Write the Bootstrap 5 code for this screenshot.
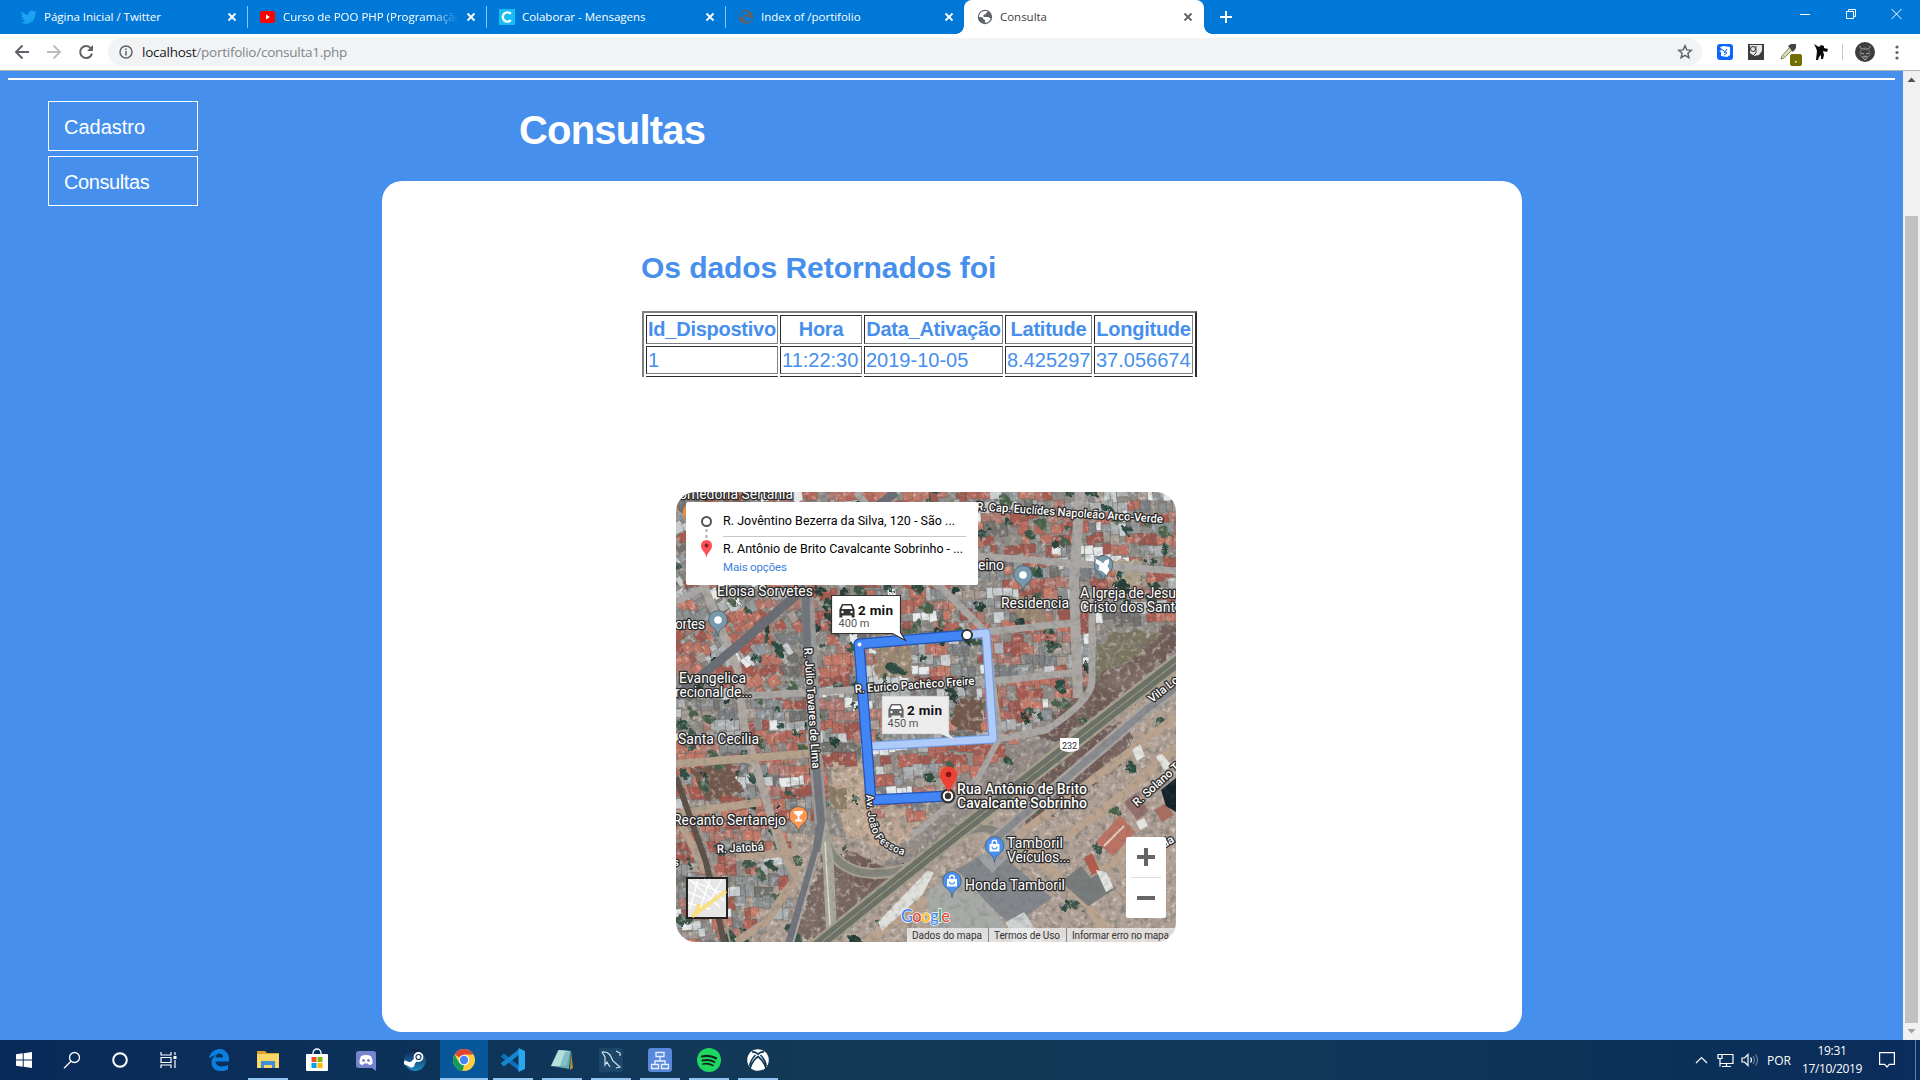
<!DOCTYPE html>
<html lang="pt-BR">
<head>
<meta charset="utf-8">
<title>Consulta</title>
<link href="https://cdn.jsdelivr.net/npm/bootstrap@5.3.0/dist/css/bootstrap.min.css" rel="stylesheet">
<style>
html,body{width:1920px;height:1080px;overflow:hidden}
body{font-family:"Liberation Sans",Arial,sans-serif;background:#468fed;line-height:1.2}
svg{display:block;flex:none}
.tabstrip{height:34px;background:#0078d7;font:11.5px "Open Sans",sans-serif;color:#fff}
.btab{width:239px;padding-left:12px;position:relative;height:34px;flex:none}
.btab .ttl{width:176px;flex:none;margin-left:7px;padding-bottom:1px;overflow:hidden;white-space:nowrap;letter-spacing:-.02px}
.btab .cls{margin-left:7px}
.btab.sep{border-right:1px solid transparent;border-image:linear-gradient(#0078d7 20%,#8fc4f0 20%,#8fc4f0 80%,#0078d7 80%) 1}
.btab.active{background:#fff;color:#3c4043;border-radius:8px 8px 0 0;width:240px;padding-left:13px;margin-left:-1px}
.btab.active:before,.btab.active:after{content:"";position:absolute;bottom:0;width:8px;height:8px}
.btab.active:before{left:-8px;background:radial-gradient(circle at 0 0,transparent 7.5px,#fff 8px)}
.btab.active:after{right:-8px;background:radial-gradient(circle at 100% 0,transparent 7.5px,#fff 8px)}
.fade-end{-webkit-mask-image:linear-gradient(90deg,#000 84%,transparent 100%)}
.toolbar{height:37px;background:#fff;border-bottom:1px solid #b3b3b3;padding:0 0 0 14px}
.omni{width:1594px;height:28px;border-radius:14px;background:#f1f3f4;margin-left:14px;padding:0 9px 0 11px;font:13.5px "Open Sans",sans-serif;color:#80868b}
.omni b{font-weight:400;color:#202124}
.omni span{margin-left:9px;letter-spacing:-.25px}
.viewport-area{height:969px}
.pagebody{width:1903px}
.rule{height:2px;background:#fff;margin:7px 8px 0}
.side{width:382px;padding:21px 0 0 48px;gap:5px}
.side a{width:150px;height:50px;border:1px solid #fff;color:#fff;text-decoration:none;font-size:20px;padding:1px 0 0 15px}
.side a+a{letter-spacing:-.4px}
.heading{height:101px;padding:0 0 2px 137px}
.heading h1{font-size:40px;font-weight:700;color:#fff;line-height:1;letter-spacing:-.8px}
.panel-main{width:1140px;height:851px;border-radius:20px;background:#fff;padding:70px 0 0 260px}
.panel-main h2{font-size:30px;line-height:34px;font-weight:700;color:#468fed;margin:0 0 26px -1px;letter-spacing:-.06px}
.tblwrap{height:66px;overflow:hidden}
.dados{width:555px;table-layout:fixed;border-collapse:separate;border-spacing:2px;border:2px solid;border-color:#808080 #2c2c2c #2c2c2c #808080;color:#468fed;font-size:20px;line-height:22px}
.dados th,.dados td{border:1px solid;border-color:#2c2c2c #808080 #808080 #2c2c2c;padding:0 1px;height:28px;white-space:nowrap}
.dados th{height:29px;text-align:center;letter-spacing:-.25px;padding-bottom:2px}
.map{width:500px;height:450px;margin:115px 0 0 34px;border-radius:20px;overflow:hidden;font-family:Roboto,sans-serif}
.scroll{width:17px;background:#f1f1f1}
.thumb{width:13px;height:807px;background:#c1c1c1}
.taskbar{height:40px;background:linear-gradient(90deg,#092a5a,#0b2f59 15%,#10375a 30%,#123a55 45%,#0f3659 75%,#0a3058 88%,#0b2c5c);color:#fff;font:12px "Open Sans",sans-serif}
.tk{width:48px;height:40px;display:flex;align-items:center;justify-content:center;flex:none}
.apps{gap:1px;margin-left:3px}
.run{background:linear-gradient(#93c5f3,#93c5f3) bottom/40px 2px no-repeat}
.run.on{background:linear-gradient(#93c5f3,#93c5f3) bottom/48px 2px no-repeat,#07589a}
.lang{width:30px;margin-left:8px}
.clock{width:70px;line-height:18px;letter-spacing:-.35px}
.peek{width:1px;background:#5f7ea3;margin-left:20px;margin-right:4px}
</style>
<script src="https://cdn.jsdelivr.net/npm/bootstrap@5.3.0/dist/js/bootstrap.bundle.min.js"></script>
</head>
<body class="d-flex flex-column">
<svg width="0" height="0" class="position-absolute">
<symbol id="x" viewBox="0 0 10 10"><path d="M1.5 1.5l7 7M8.500 1.500l-7 7" stroke="currentColor" stroke-width="1.8"/></symbol>
<symbol id="globe" viewBox="0 0 16 16"><circle cx="8" cy="8" r="7.2" fill="#5f6368"/><path d="M6.200 2.200c-2.600.8-4.200 3-4.200 5.800 2.400 0 4 .2 4.200 1.800.1 1 1.800.4 1.800 1.600v2.400c3-.2 5.200-2 5.800-4.600-1.200.2-1.600-1.200-3-1.200H7.600c-1.800 0-1.600-2.600.2-2.600 1.600 0 .6-1.600 2.200-2l.4-1.200C9 1.800 7.500 1.800 6.200 2.200z" fill="var(--land,#fff)"/></symbol>
<symbol id="pin" viewBox="-10 -10 20 28"><path d="M0 16.500C-1 10-3 9-6.500 6.500A9.300 9.300 0 1 1 6.500 6.500C3 9 1 10 0 16.500z"/></symbol>
<symbol id="car" viewBox="0 0 16 15"><path d="M3 1h10l2.600 5.500V14.500h-3v-2H3.400v2h-3V6.500z"/><path d="M4 2.600h8l1.400 3.400H2.600z" fill="#fff"/><circle cx="3.500" cy="9" r="1.200" fill="#fff"/><circle cx="12.500" cy="9" r="1.200" fill="#fff"/></symbol>
</svg>

<header class="tabstrip d-flex">
 <div style="width:9px"></div>
 <div class="btab sep d-flex align-items-center"><svg width="16" height="16" viewBox="0 0 24 24" fill="#1da1f2"><path d="M23.600 4.900c-.9.4-1.800.6-2.800.8 1-.6 1.800-1.600 2.100-2.700-1 .6-2 1-3.100 1.200a4.900 4.900 0 0 0-8.400 4.500C7.300 8.500 3.700 6.500 1.300 3.600c-1.300 2.200-.7 5.100 1.500 6.600-.8 0-1.600-.2-2.200-.6 0 2.300 1.600 4.400 3.900 4.900-.7.200-1.500.2-2.200.1.600 2 2.400 3.300 4.600 3.400A9.900 9.900 0 0 1-.4 20 14 14 0 0 0 21.200 7.400c1-.7 1.800-1.600 2.400-2.500z"/></svg><div class="ttl">Página Inicial / Twitter</div><svg class="cls" width="10" height="10"><use href="#x"/></svg></div>
 <div class="btab sep d-flex align-items-center"><svg width="16" height="16"><rect y="2" width="15" height="12" rx="2.500" fill="#f00"/><path d="M6 5.500v5l4-2.500z" fill="#fff"/></svg><div class="ttl fade-end">Curso de POO PHP (Programação</div><svg class="cls" width="10" height="10"><use href="#x"/></svg></div>
 <div class="btab sep d-flex align-items-center"><svg width="16" height="16"><rect width="16" height="16" fill="#15bdf3"/><path d="M11.800 4.900A4.600 4.600 0 1 0 11.800 11.100" fill="none" stroke="#fff" stroke-width="2.400"/></svg><div class="ttl">Colaborar - Mensagens</div><svg class="cls" width="10" height="10"><use href="#x"/></svg></div>
 <div class="btab d-flex align-items-center"><svg width="16" height="16" style="--land:#0078d7"><use href="#globe"/></svg><div class="ttl">Index of /portifolio</div><svg class="cls" width="10" height="10"><use href="#x"/></svg></div>
 <div class="btab active d-flex align-items-center"><svg width="16" height="16"><use href="#globe"/></svg><div class="ttl">Consulta</div><svg class="cls" width="10" height="10" color="#5f6368"><use href="#x"/></svg></div>
 <svg width="14" height="34" style="margin-left:15px"><path d="M7 11v12M1 17h12" stroke="#fff" stroke-width="2"/></svg>
 <svg width="110" height="34" class="ms-auto me-3" fill="none" stroke="#fff"><path d="M6 14.500h10M97.500 9l10 10M107.500 9l-10 10"/><path d="M52.500 11.500h7v7h-7zM54.500 11V9.500h7v7H60"/></svg>
</header>

<div class="toolbar d-flex align-items-center">
 <svg width="80" height="16" fill="none" stroke="#5f6368" stroke-width="2"><path d="M15 8H2M8.500 1.500L2 8l6.500 6.500"/><path d="M33 8h13M39.500 1.500L46 8l-6.500 6.500" stroke="#babcbe"/><path d="M77 4.500A6 6 0 1 0 78 9.500"/><path d="M79 1v6h-6z" fill="#5f6368" stroke="none"/></svg>
 <div class="omni d-flex align-items-center"><svg width="14" height="14" fill="none" stroke="#5f6368" stroke-width="1.500"><circle cx="7" cy="7" r="6"/><path d="M7 6v4.500M7 3.500V5"/></svg><span><b>localhost</b>/portifolio/consulta1.php</span>
 <svg class="ms-auto" width="16" height="16" viewBox="0 0 16 16" fill="none" stroke="#5f6368" stroke-width="1.500"><path d="M8 1.800l1.800 4.100 4.500.4-3.400 3 1 4.400L8 11.400l-3.900 2.300 1-4.400-3.400-3 4.500-.4z"/></svg></div>
 <svg style="margin-left:15px" width="196" height="36" viewBox="1718 34 196 36">
  <rect x="1718" y="44" width="16" height="16" rx="3" fill="#0a66ff"/><path d="M1721 47l4-1 6 1v8l-3 2-6-1v-4l-2-1 3-1z" fill="#fff"/><path d="M1722 49l6 4-3 2M1728 49l-3 4" stroke="#0a66ff" fill="none"/>
  <rect x="1749" y="44" width="16" height="16" fill="#3c3c3c"/><path d="M1751 45h12v6l-3 4-5 1-4-3z" fill="#e7e7e7"/><circle cx="1754" cy="49" r="2.500" fill="none" stroke="#333"/><path d="M1757 46v7l-5 5M1752 58h4" stroke="#444" fill="none"/>
  <path d="M1782 59l1-3 8-9 3 2-9 9z" fill="#dfe3b4" stroke="#7b8060"/><path d="M1789 46l3-2 5 0v4l-3 4z" fill="#444"/>
  <rect x="1791" y="54" width="12" height="12" rx="2" fill="#716f00"/><rect x="1796" y="61" width="1.500" height="1.500" fill="#fff"/>
  <path d="M1815 44l5 3 2-2 3 1v2l4 1-1 3-4-1 1 4-1 4h-2v-4l-2 2-1 3h-2l1-9-1-3z" fill="#0a0a0a"/>
  <path d="M1843.500 44v16" stroke="#c8c8c8"/>
  <circle cx="1866" cy="52" r="10" fill="#3d3d3d"/><path d="M1861 46c0 3 2 3 5 3s5 0 5-3M1862 53l3 1M1870 53l-3 1M1863 57c2-1 4-1 6 0l-3 3z" stroke="#aaa" fill="none"/><circle cx="1866" cy="53" r="5" fill="none" stroke="#777"/>
  <g fill="#5f6368"><circle cx="1898" cy="47" r="1.600"/><circle cx="1898" cy="52.500" r="1.600"/><circle cx="1898" cy="58" r="1.600"/></g>
 </svg>
</div>

<main class="viewport-area d-flex">
 <div class="pagebody">
  <div class="rule"></div>
  <div class="d-flex">
   <nav class="side d-flex flex-column"><a href="#" class="d-flex align-items-center">Cadastro</a><a href="#" class="d-flex align-items-center">Consultas</a></nav>
   <section>
    <div class="heading d-flex align-items-center"><h1 class="m-0">Consultas</h1></div>
    <div class="panel-main">
     <h2>Os dados Retornados foi</h2>
     <div class="tblwrap"><table class="dados">
      <colgroup><col style="width:132px"><col style="width:82px"><col style="width:139px"><col style="width:87px"><col style="width:99px"></colgroup>
      <tr><th>Id_Dispostivo</th><th>Hora</th><th>Data_Ativação</th><th>Latitude</th><th>Longitude</th></tr>
      <tr><td>1</td><td>11:22:30</td><td>2019-10-05</td><td>8.425297</td><td>37.056674</td></tr>
      <tr><td></td><td></td><td></td><td></td><td></td></tr>
     </table></div>
     <div class="map">
<svg width="500" height="450" viewBox="0 0 500 450">
 <defs>
  <filter id="grain" x="0" y="0" width="100%" height="100%"><feTurbulence type="fractalNoise" baseFrequency=".16" numOctaves="4" seed="4"/><feColorMatrix values="0 0 0 0 .12  0 0 0 0 .13  0 0 0 0 .12  2.400 1.200 0 0 -1.750"/></filter>
  <filter id="grain2" x="0" y="0" width="100%" height="100%"><feTurbulence type="fractalNoise" baseFrequency=".2" numOctaves="3" seed="19"/><feColorMatrix values="0 0 0 0 .95  0 0 0 0 .93  0 0 0 0 .91  2.200 1.300 0 0 -1.800"/></filter>
  <filter id="patch" x="0" y="0" width="100%" height="100%"><feTurbulence type="fractalNoise" baseFrequency=".035" numOctaves="4" seed="8"/><feColorMatrix values="0 0 0 0 .36  0 0 0 0 .28  0 0 0 0 .26  2.600 0 0 0 -1.150"/></filter>
  <filter id="soft" x="0" y="0" width="100%" height="100%"><feGaussianBlur stdDeviation=".45"/></filter>
  <filter id="rough"><feTurbulence type="fractalNoise" baseFrequency=".12" numOctaves="3" seed="3"/><feDisplacementMap in="SourceGraphic" scale="12"/></filter>
  <path id="avp" d="M190 303C192 325 193 338 202 349C210 357 218 360 234 366"/>
 </defs>
 <g filter="url(#soft)">
 <rect width="500" height="450" fill="#b0a094"/>
 <path d="M0 0H500V150L440 190L230 350L100 340L50 450H0z" fill="#8f8b86"/>
 <g filter="url(#rough)">
 <path d="M150 265l45 5 5 40 60 10-30 40-60-15z" fill="#c0a893"/>
 <path d="M322 252l55-28 60-45 63-60v62L235 375l-35 5 40-40z" fill="#938a86"/>
 <path d="M360 290l60-55 38-5-6 30-45 45-35 20-30 10zM158 365l20-5 30 15 20 10-20 12-30-5zM400 200l60-45 40-30v30l-60 55-60 40-20-5z" fill="#6f5a55"/>
 <path d="M412 165l25-25 50 0-35 30-40 20z" fill="#7a745e"/>
 <path d="M152 352l28 42 45-2-65 56h-44z" fill="#79655f"/>
 </g>
 <rect width="500" height="450" filter="url(#patch)" opacity=".4"/>
 <rect width="500" height="450" filter="url(#grain)" opacity=".35"/>
 <g id="houses"></g>
 <g filter="url(#rough)"><path d="M198 156h38v30h-36zM340 106h28v26h-26z" fill="#99866f"/><path d="M278 208h28v32l-28-3zM14 276l40-6 14 30-38 10z" fill="#71594c"/><path d="M153 296h18v22h-18z" fill="#8d7b66"/><path d="M436 68h30v28h-28z" fill="#ac9f8b"/></g>
 <g id="trees" filter="url(#rough)"></g>
 <rect width="500" height="450" filter="url(#grain2)" opacity=".55"/>
 <g fill="none" stroke="#aaa7a4" stroke-width="8" stroke-linejoin="round">
  <path d="M27 92L62 178L68 235L106 360L118 380" stroke="#b0a8a2"/><path d="M0 272L138 261M0 322L85 310" stroke="#b5a18c"/><path d="M70 204L310 190L404 180" stroke-width="7"/><path d="M404 0L398 90L402 206" stroke-width="10"/><path d="M416 100V190Q414 210 370 238L318 248M300 64L500 79M264 96L200 40L170 20M180 0L240 70L310 140L404 130" stroke-width="7"/><path d="M310 140L324 245L300 290L235 345" stroke-width="6"/>
  <path d="M52 50L130 95M0 110L27 96" stroke-width="6"/>
  <path d="M100 335L120 385L90 430L60 450M60 365L120 360M0 322L30 380" stroke="#b5a08e"/>
  <path d="M190 450L340 345L500 225M390 345L450 300L500 255M345 350L400 400L440 450M404 398L460 350" stroke="#bba48f"/>
  <path d="M0 205L60 155L110 112L130 95M155 50L220 0" stroke="#6a6d74" stroke-width="9"/>
  <path d="M0 285L30 370L48 450" stroke="#5c5149" stroke-width="6"/><path d="M6 285L36 370L54 450" stroke="#a6968a" stroke-width="2"/>
 </g>
 <g fill="none">
  <path d="M147 335C153 380 190 392 245 372C285 340 300 330 322 340L345 362" stroke="#a7a294" stroke-width="11"/><path d="M147 335C153 380 190 392 245 372C285 340 300 330 322 340" stroke="#85857d" stroke-width="7"/>
  <path d="M131 105L134 150L139 260L145 330L152 365L156 450" stroke="#aaa79c" stroke-width="11"/>
  <path d="M131 105L134 150L139 260L145 330" stroke="#9a9a9a" stroke-width="13"/>
  <path d="M129 95L131 150L139 260L145 330L140 360L112 455" stroke="#71747c" stroke-width="8"/><path d="M149 350L154 435" stroke="#dedbc8" stroke-width="1.500"/><path d="M143 360L116 455" stroke="#a9a9a6" stroke-width="2"/>
  <path d="M318 348L470 218L510 188" stroke="#aaa4a0" stroke-width="12"/><path d="M318 348L470 218L510 188" stroke="#8b8c91" stroke-width="7"/>
  <path d="M132 461L254 363L434 222L510 163" stroke="#a6a08d" stroke-width="16"/><path d="M132 461L254 363L434 222L510 163" stroke="#6d7269" stroke-width="11"/><path d="M132 461L254 363L434 222L510 163" stroke="#aaa58a" stroke-width="1"/>
 </g>
 <path d="M280 378l38-22 58 50-40 28-20-18z" fill="#83868b"/><path d="M250 400l35-18 45 50-14 18h-60z" fill="#a8aaa8"/><path d="M330 430l18-10 20 30h-30z" fill="#cfd3d2"/><path d="M202 430l50-52 6 3-12 22-40 36z" fill="#e0e0dc"/><path d="M302 366l36-25 8 10-30 30z" fill="#9ea2a5"/>
 <path d="M385 390l20-16 10 12 10-6 15 16-28 18z" fill="#777b7b"/><path d="M420 350l24-27 15 17-22 24z" fill="#bb7364"/><path d="M428 354l20-20" stroke="#e2cfc4" stroke-width="2"/><path d="M408 366l8-5 8 18-8 4z" fill="#b25b4c"/><path d="M420 378l10 2 8 16-8 4z" fill="#e2e3e0"/><path d="M448 310l12-9 13 18-12 9z" fill="#96706a"/><path d="M478 318l12-7 8 12-12 7z" fill="#a86f62"/><path d="M485 298l15-12v34l-10-6z" fill="#15232c"/>
 <path d="M456 258l8-6 5 12-8 5zM480 265l6-3 10 12-7 5zM460 330l8-4 4 8-8 4z" fill="#e2e4df"/>
 <rect width="500" height="450" filter="url(#grain)" opacity=".3"/>
 </g>
 <g fill="none" stroke-linejoin="round">
  <path d="M291 143L310 141L317 247L196 254" stroke="#6e9bea" stroke-width="9"/><path d="M291 143L310 141L317 247L196 254" stroke="#aecbfa" stroke-width="7"/>
  <path d="M291 143L183 152L195 308L272 304" stroke="#2456b8" stroke-width="11"/><path d="M291 143L183 152L195 308L272 304" stroke="#4285f4" stroke-width="8.500"/>
 </g>
 <circle cx="183.500" cy="152.500" r="2" fill="#fff"/><circle cx="291" cy="143" r="5" fill="#fff" stroke="#333" stroke-width="2"/>
 <circle cx="272" cy="304" r="5" fill="none" stroke="#333" stroke-width="5"/><circle cx="272" cy="304" r="4.200" fill="#333" stroke="#fff" stroke-width="2"/>
 <path d="M272.500 302c-1-8-8.500-12-8.500-19a8.500 8.500 0 0 1 17 0c0 7-7.500 11-8.500 19z" fill="#ea4335"/><circle cx="272.500" cy="282.500" r="2.800" fill="#8b1010"/>
 <g fill="#fff" stroke="#2b2b2b" stroke-width="2.600" stroke-linejoin="round" paint-order="stroke" font-size="14" id="labels">
  <text x="3" y="7" textLength="114">omedoria Sertania</text>
  <text x="41" y="104" textLength="96">Eloisa Sorvetes</text><text x="-1" y="137" textLength="30">ortes</text>
  <text x="3" y="191" textLength="67">Evangelica</text><text x="-1" y="205" textLength="77">recional de...</text>
  <text x="2" y="252" textLength="81">Santa Cecilia</text><text x="-3" y="333" textLength="113">Recanto Sertanejo</text>
  <text x="302" y="78" textLength="26">eino</text><text x="325" y="116" textLength="68">Residencia</text>
  <text x="404" y="106" textLength="96">A Igreja de Jesu</text><text x="404" y="120" textLength="95">Cristo dos Sant</text>
  <text x="331" y="356" textLength="56">Tamboril</text><text x="331" y="370" textLength="63">Veículos...</text><text x="289" y="398" textLength="100">Honda Tamboril</text>
  <g font-weight="500"><text x="281" y="302" textLength="130">Rua Antônio de Brito</text><text x="281" y="316" textLength="130">Cavalcante Sobrinho</text></g>
  <g font-size="11.500" font-weight="500">
   <text x="41" y="361" textLength="47" transform="rotate(-3 41 361)">R. Jatobá</text>
   <text x="300" y="18" textLength="187" transform="rotate(4 300 18)">R. Cap. Euclídes Napoleão Arco-Verde</text>
   <text x="179" y="201" textLength="120" transform="rotate(-4 179 201)">R. Eurico Pachêco Freire</text>
   <text x="128" y="156" textLength="121" transform="rotate(86 128 156)">R. Júlio Tavares de Lima</text>
   <text x="476" y="211" transform="rotate(-38 476 211)">Vila Lo</text><text x="461" y="315" transform="rotate(-42 461 315)">R. Solano T</text><text x="488" y="356" transform="rotate(-30 488 356)">da</text>
   <text x="-3" y="374">s</text>
   <text font-size="10.500"><textPath href="#avp">Av. João Pessoa</textPath></text>
  </g>
 </g>
 <g stroke="#4c5d66" stroke-width=".8">
  <g fill="#7899ab"><use href="#pin" x="32" y="118" width="20" height="28"/><use href="#pin" x="337" y="73" width="20" height="28"/><use href="#pin" x="417.500" y="63" width="20" height="28"/></g>
  <use href="#pin" x="112.500" y="314" width="20" height="28" fill="#ff9752"/>
  <g fill="#4a90f0"><use href="#pin" x="308.500" y="344" width="20" height="28"/><use href="#pin" x="266" y="379" width="20" height="28"/></g>
 </g>
 <g fill="#fff"><circle cx="42" cy="128" r="3.800"/><circle cx="347" cy="83" r="3.800"/><path d="M420 67l5 2.500 2 2 2-3 4-1.500v4l-1.500 3 2 4-3 5-4.500-4-3.500-1 1-4.500-4-2.500z"/><path d="M118 319h9v2l-3.500 3v3.500h2.500v2h-7v-2h2.500v-3.500L118 321z"/>
  <path id="bag" d="M313.500 352h10v7.500h-10zM315.500 352v-1.500a3 3 0 0 1 6 0V352h-1.500v-1.500a1.500 1.500 0 0 0-3 0V352z"/><use href="#bag" x="-42.500" y="35"/></g>
 <path d="M316 354.500a2.500 2.500 0 0 0 5 0M273.500 389.500a2.500 2.500 0 0 0 5 0" fill="none" stroke="#4a90f0" stroke-width="1.200"/>
 <path d="M384 246h19v10q0 3-9.500 4-9.500-1-9.500-4z" fill="#fff"/><text x="386" y="256.500" font-size="9" fill="#333" textLength="15">232</text>
 <path d="M155.500 103.500h69v37l5 8-13-7h-61z" fill="#fff" stroke="#333" stroke-width="1.200"/>
 <path d="M206 204h67v38l7 7-15-7h-59z" fill="#ececec" stroke="#bbb" stroke-width=".6"/>
 <use href="#car" x="163" y="111" width="16" height="15" fill="#333"/><use href="#car" x="212" y="211" width="16" height="15" fill="#666"/>
 <g font-size="13.500" font-weight="700" fill="#111"><text x="182" y="123" textLength="35">2 min</text><text x="231" y="223" textLength="35">2 min</text></g>
 <g font-size="11" fill="#555"><text x="162.500" y="135" textLength="31">400 m</text><text x="211.500" y="235" textLength="31">450 m</text></g>
 <circle cx="15" cy="20" r="8" fill="#f58b35"/>
 <rect x="10" y="10" width="292" height="83" rx="2" fill="#fff"/>
 <circle cx="30.500" cy="29.500" r="4.500" fill="none" stroke="#555" stroke-width="2"/><path d="M30.500 37v10" stroke="#bbb" stroke-width="2.500" stroke-dasharray="3 3"/>
 <path d="M30.500 66c-.5-6-5.500-7-5.500-12.500a5.500 5.500 0 0 1 11 0c0 5.500-5 6.500-5.500 12.500z" fill="#ff4e58"/><circle cx="30.500" cy="53.500" r="2" fill="#8f1d22"/>
 <path d="M47 44.500h243" stroke="#c6c6c6"/>
 <g font-size="12.500" fill="#000"><text x="47" y="33" textLength="232">R. Jovêntino Bezerra da Silva, 120 - São ...</text><text x="47" y="61" textLength="240">R. Antônio de Brito Cavalcante Sobrinho - ...</text></g>
 <text x="47" y="79" font-size="11.500" fill="#3a7fe0" textLength="64">Mais opções</text>
 <rect x="11" y="386" width="40" height="40" fill="#e6e6e6" stroke="#222" stroke-width="2"/>
 <path d="M13 388l36 14M22 387l-8 30M34 387l-10 30M46 387l-12 22M12 400l30 12M12 411l22 6M28 387l20 22M14 388l30 27" stroke="#fff" stroke-width="1.300"/><path d="M16 424.500L50 399M19 424l4-12" stroke="#f8df83" stroke-width="4"/>
 <rect x="450" y="345" width="40" height="81" rx="2" fill="#fff"/><path d="M455 385.500h30" stroke="#ddd"/><path d="M461 365h18M470 356v18M461 406h18" stroke="#666" stroke-width="4"/>
 <text x="225" y="430" font-size="16.500" font-weight="500" textLength="49" stroke="#fff" stroke-width="1.300" paint-order="stroke" font-family="Lato"><tspan fill="#4285f4">G</tspan><tspan fill="#ea4335">o</tspan><tspan fill="#fbbc05">o</tspan><tspan fill="#4285f4">g</tspan><tspan fill="#34a853">l</tspan><tspan fill="#ea4335">e</tspan></text>
 <rect x="231" y="436" width="269" height="14" fill="#f5f5f5" opacity=".72"/>
 <path d="M312.500 436v14M390.500 436v14" stroke="#888"/>
 <g font-size="10" fill="#333"><text x="236" y="446.500" textLength="70">Dados do mapa</text><text x="318" y="446.500" textLength="66">Termos de Uso</text><text x="396" y="446.500" textLength="97">Informar erro no mapa</text></g>
</svg>
     </div>
    </div>
   </section>
  </div>
 </div>
 <div class="scroll d-flex flex-column align-items-center">
  <svg width="17" height="17"><path d="M4.500 11l4-4.500 4 4.500z" fill="#505050"/></svg>
  <div class="thumb" style="margin-top:128px"></div>
  <svg width="17" height="17"><path d="M4.500 6l4 4.500 4-4.500z" fill="#a0a0a0"/></svg>
 </div>
</main>

<footer class="taskbar d-flex">
 <div class="tk"><svg width="16" height="16" fill="#fff"><path d="M0 2.300l6.700-1v6.200H0zM7.700 1.200L16 0v7.500H7.700zM0 8.500h6.700v6.200L0 13.700zM7.700 8.500H16V16l-8.300-1.200z"/></svg></div>
 <div class="tk"><svg width="18" height="18" fill="none" stroke="#fff" stroke-width="1.300"><circle cx="11.500" cy="6.500" r="5"/><path d="M8 10.200L1 17.200"/></svg></div>
 <div class="tk"><svg width="18" height="18" fill="none" stroke="#fff" stroke-width="2"><circle cx="9" cy="9" r="6.800"/></svg></div>
 <div class="tk"><svg width="17" height="16" fill="none" stroke="#fff" stroke-width="1.200"><path d="M1 0v3h10V0M1 16v-3h10v3M1 5.500h10v5H1zM15 0v3M15 8v8"/><path d="M13.500 4h3v3h-3z" fill="#fff" stroke="none"/></svg></div>
 <div class="apps d-flex">
 <div class="tk"><svg width="22" height="22" viewBox="0 0 22 22" fill="#0a7fe0"><path d="M1 9.500C2 3.500 6.500 0 11.500 0 17.500 0 21 4.500 21 10v2.500H7.500c.2 3.500 3 5 6.300 5 2.300 0 4.500-.6 6.200-1.700v4.600c-2 1.100-4.500 1.600-7 1.600-6 0-9.500-3.500-9.500-8.500 0-3.200 1.800-6 4.500-7.300C5 7 2.500 7.800 1 9.500zM7.600 8.500H15c0-2.500-1.300-4-3.600-4-2.200 0-3.500 1.600-3.800 4z"/></svg></div>
 <div class="tk run"><svg width="22" height="20"><path d="M0 1h8l2 2h12v15H0z" fill="#e0a32a"/><path d="M0 4h22v14H0z" fill="#fcd667"/><path d="M4 18v-7h14v7h-3v-3H7v3z" fill="#3f8fd4"/></svg></div>
 <div class="tk"><svg width="24" height="24"><path d="M8 8V5a4 4 0 0 1 8 0v3" fill="none" stroke="#fff" stroke-width="1.300"/><rect x="1" y="6" width="22" height="17" rx="1" fill="#fff"/><path d="M6.500 9h5v5h-5z" fill="#f25022"/><path d="M12.500 9h5v5h-5z" fill="#7fba00"/><path d="M6.500 15h5v5h-5z" fill="#00a4ef"/><path d="M12.500 15h5v5h-5z" fill="#ffb900"/></svg></div>
 <div class="tk"><svg width="20" height="21"><path d="M2.500 1h15A2.500 2.500 0 0 1 20 3.500V21l-4-3H2.500A2.500 2.500 0 0 1 0 15.500v-12A2.500 2.500 0 0 1 2.500 1z" fill="#7783cc"/><path d="M5 6q5-2 10 0 2 4 1.500 7.500Q15 15 13 15l-1-1.500H8L7 15q-2 0-3.500-1.500Q3 10 5 6z" fill="#fff"/><circle cx="7.500" cy="10.500" r="1.400" fill="#7783cc"/><circle cx="12.500" cy="10.500" r="1.400" fill="#7783cc"/></svg></div>
 <div class="tk"><svg width="22" height="22"><defs><linearGradient id="st" x2="0" y2="1"><stop stop-color="#10204a"/><stop offset="1" stop-color="#1e88bd"/></linearGradient></defs><circle cx="11" cy="11" r="11" fill="url(#st)"/><path d="M0 13l7 3 7-8" stroke="#fff" stroke-width="4" fill="none"/><circle cx="14.500" cy="8" r="4" fill="#13305c" stroke="#fff" stroke-width="1.800"/><circle cx="14.500" cy="8" r="2" fill="#fff"/><circle cx="7.500" cy="15.500" r="3" fill="#fff"/></svg></div>
 <div class="tk run on"><svg width="22" height="22"><circle cx="11" cy="11" r="11" fill="#ffcd40"/><path d="M11 11L1.500 5.500A11 11 0 0 1 20.500 5.500H11z" fill="#db4437"/><path d="M1.500 5.500L6.200 13.700 11 16 9.500 21.900A11 11 0 0 1 1.500 5.500z" fill="#0f9d58"/><circle cx="11" cy="11" r="5.200" fill="#fff"/><circle cx="11" cy="11" r="4.200" fill="#4285f4"/></svg></div>
 <div class="tk run"><svg width="24" height="24"><path d="M0 8l3-2.500 16 13v5L0 9z" fill="#0e70b8"/><path d="M0 16l3 2.500L19 6V.5L0 15z" fill="#1686d0"/><path d="M17.500 0L24 3v18l-6.500 3z" fill="#2ba7ee"/></svg></div>
 <div class="tk run"><svg width="24" height="24"><path d="M21 3l2 17-3 2z" fill="#b98c45"/><path d="M8 2l13 1-2 18L1 18z" fill="#65a9ae"/><path d="M9 2l11 1-4 15L1 18z" fill="#b5dfdd"/><path d="M15 4l-5 14h6l4-15z" fill="#80bec2"/></svg></div>
 <div class="tk run"><svg width="24" height="24"><rect width="24" height="24" rx="3" fill="#1b4769"/><path d="M3 4c7-1 9 4 11 9l7 6-4 1M3 4l3 5v8l2-3 3 5M17 3l4 2 0 3" fill="none" stroke="#d4e2ea" stroke-width="1.200"/></svg></div>
 <div class="tk run"><svg width="24" height="24"><rect width="24" height="24" rx="3" fill="#5788dc"/><path d="M8 4.500h8v4H8zM12 9v4M7 17v-4h10v4M3.500 16.500h7v4h-7zM13.500 16.500h7v4h-7z" fill="none" stroke="#e8f0ff" stroke-width="1.300"/></svg></div>
 <div class="tk run"><svg width="24" height="24"><circle cx="12" cy="12" r="12" fill="#1ed760"/><g fill="none" stroke="#0c281b" stroke-linecap="round"><path d="M5 8.500q7-2 14 1.700" stroke-width="2.300"/><path d="M5.500 12.500q6.500-1.600 12 1.500" stroke-width="2"/><path d="M6 16q5.500-1.300 10 1.400" stroke-width="1.700"/></g></svg></div>
 <div class="tk run"><svg width="22" height="22"><circle cx="11" cy="11" r="10.800" fill="#fff"/><path d="M5 3q3-.5 6 2.200Q14 2.500 17 3M3 19.500Q5 12 11 7.500 17 12 19 19.500M8.500 6Q3.500 11 2.700 17M13.500 6q5 5 5.800 11" fill="none" stroke="#123a55" stroke-width="1.600"/></svg></div>
 </div>
 <div class="ms-auto d-flex align-items-center">
  <svg width="64" height="20" fill="none" stroke="#fff" stroke-width="1.200"><path d="M1 13l5.500-5.500L12 13"/><path d="M25 4.500h13v9H25M31.500 14v2.500M27 16.500h9M23 4.500h4v4h-4zM25 8.500v8"/><path d="M47 8h2.500L53 4.500v11L49.500 12H47z"/><path d="M55.500 7.500q2 2.500 0 5"/><path d="M58 6q3 4 0 8M60.500 4.500q4 5.500 0 11" opacity=".4"/></svg>
  <span class="lang">POR</span>
  <div class="clock text-center">19:31<br>17/10/2019</div>
  <svg width="16" height="18" style="margin-left:12px" fill="none" stroke="#fff" stroke-width="1.200"><path d="M.6 1.600h14.800v11.800h-5L8 16l-2.400-2.600h-5z"/></svg>
 </div>
 <div class="peek"></div>
</footer>
<script>
// Scatter roofs and trees over the built-up part of the aerial view
let s=7;const rnd=()=>(s=(s*16807)%2147483647)/2147483647;
const NS='http://www.w3.org/2000/svg',H=document.getElementById('houses'),T=document.getElementById('trees');
const red=['#b4675b','#c57a68','#a85a4f','#bd7263','#9f5850','#b07a70'],gry=['#95999d','#adb1b3','#7b7e82','#c9ced0','#e6eaeb','#73726f','#a69b93','#8a8f90'];
const urban=(x,y)=>y<450-(x-140)*.77-58&&!(x>110&&y>315)&&!(x>148&&x<195&&y>265)&&!(x>412&&y>125);
for(let y=-4;y<450;y+=11){let run=0,c='',isRed=false;for(let x=-4;x<500;){const w=4+rnd()*8,h=8+rnd()*6;
 if(run--<=0){run=rnd()*4|0;isRed=rnd()<.5}
 if(rnd()<.6||!c){const p=isRed?red:gry;c=p[rnd()*p.length|0]}
 if(urban(x,y)&&rnd()<.84){const r=document.createElementNS(NS,'rect');
  r.setAttribute('x',x);r.setAttribute('y',y+rnd()*4);r.setAttribute('width',w+.5);r.setAttribute('height',h);r.setAttribute('fill',c);r.setAttribute('stroke','#5b504c');r.setAttribute('stroke-width','.35');
  const a=x<125&&y<200?-32:-4;r.setAttribute('transform',`rotate(${a} ${x+w/2} ${y+h/2})`);H.append(r)}
 x+=w+.3}}
for(let i=0;i<300;i++){const x=rnd()*500,y=rnd()*450;if(!urban(x,y)&&rnd()<.82)continue;
 const c=document.createElementNS(NS,'ellipse');c.setAttribute('cx',x);c.setAttribute('cy',y);c.setAttribute('rx',2+rnd()*4.5);c.setAttribute('ry',2+rnd()*4.500);c.setAttribute('fill',['#2d4b3f','#3b5546','#263e35','#4a5f4a'][rnd()*4|0]);T.append(c)}
</script>
</body>
</html>
